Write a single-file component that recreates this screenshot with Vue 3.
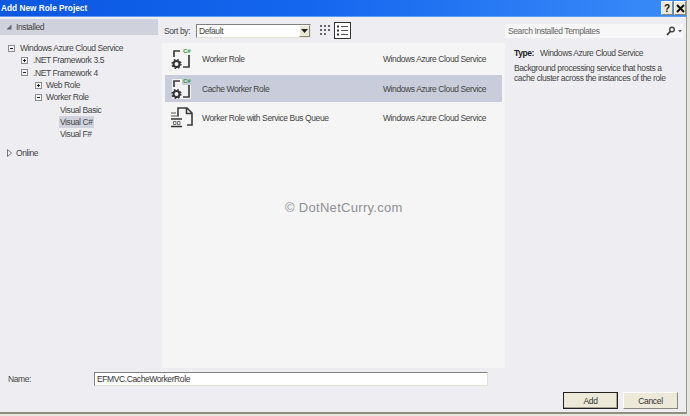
<script setup>
const tree = [
  { label: 'Windows Azure Cloud Service', box: 'minus', left: 8, gap: 4 },
  { label: '.NET Framework 3.5', box: 'plus', left: 21, gap: 4 },
  { label: '.NET Framework 4', box: 'minus', left: 21, gap: 4 },
  { label: 'Web Role', box: 'plus', left: 35, gap: 3 },
  { label: 'Worker Role', box: 'minus', left: 35, gap: 3 },
  { label: 'Visual Basic', left: 59 },
  { label: 'Visual C#', left: 59, selected: true },
  { label: 'Visual F#', left: 59 },
]

const templates = [
  { name: 'Worker Role', icon: 'cs' },
  { name: 'Cache Worker Role', icon: 'cs', selected: true },
  { name: 'Worker Role with Service Bus Queue', icon: 'queue' },
]
</script>

<template>
  <div class="screen">
    <div class="dialog">
      <header class="titlebar">
        <span class="title">Add New Role Project</span>
        <div class="title-buttons">
          <button class="cap-btn">?</button>
          <button class="cap-btn">
            <svg width="9" height="9" viewBox="0 0 9 9"><path d="M1 1l7 7M8 1L1 8" stroke="#111" stroke-width="2" /></svg>
          </button>
        </div>
      </header>

      <div class="body">
        <aside class="sidebar">
          <div class="installed">
            <svg width="6" height="6" viewBox="0 0 6 6"><path d="M5.5 .5v5h-5z" fill="#666" /></svg>
            <span>Installed</span>
          </div>
          <ul class="tree">
            <li v-for="node in tree" :key="node.label" class="tree-row" :style="{ paddingLeft: `${node.left}px` }">
              <svg v-if="node.box" class="expander" :style="{ marginRight: `${node.gap}px` }" width="7" height="7" viewBox="0 0 7 7">
                <rect x=".5" y=".5" width="6" height="6" fill="#f4f4f4" stroke="#8c8c8c" />
                <path d="M2 3.5h3" stroke="#222" />
                <path v-if="node.box === 'plus'" d="M3.5 2v3" stroke="#222" />
              </svg>
              <span class="tree-label" :class="{ selected: node.selected }">{{ node.label }}</span>
            </li>
          </ul>
          <div class="online">
            <svg width="5" height="8" viewBox="0 0 5 8"><path d="M.5 .5l4 3.5-4 3.5z" fill="#f4f4f4" stroke="#777" /></svg>
            <span>Online</span>
          </div>
        </aside>

        <main class="center">
          <div class="toolbar">
            <label class="sort-label">Sort by:</label>
            <div class="select">
              <span class="select-text">Default</span>
              <span class="select-arrow">
                <svg width="7" height="4" viewBox="0 0 7 4"><path d="M0 0h7L3.5 4z" fill="#222" /></svg>
              </span>
            </div>
            <button class="view-btn grid-view">
              <svg width="11" height="11" viewBox="0 0 11 11" fill="#666">
                <rect width="2" height="2" /><rect x="4" width="2" height="2" /><rect x="8" width="2" height="2" />
                <rect y="4" width="2" height="2" /><rect x="4" y="4" width="2" height="2" /><rect x="8" y="4" width="2" height="2" />
                <rect y="8" width="2" height="2" /><rect x="4" y="8" width="2" height="2" />
              </svg>
            </button>
            <button class="view-btn list-view">
              <svg width="11" height="11" viewBox="0 0 11 11">
                <path d="M0 1.500h2M0 5.500h2M0 9.500h2" stroke="#333" stroke-width="2" />
                <path d="M4 1.500h7M4 5.500h7M4 9.500h7" stroke="#555" />
              </svg>
            </button>
          </div>

          <div class="list">
            <div v-for="item in templates" :key="item.name" class="template" :class="{ selected: item.selected }">
              <svg class="template-icon" width="24" height="24" viewBox="0 0 24 24">
                <template v-if="item.icon === 'cs'">
                  <path v-if="item.selected" d="M2 12V2h10v6h9v14H2z" fill="#f2f2f4" />
                  <path d="M4 10V4h6M19 8v12h-6" fill="none" stroke="#3c3c3c" stroke-width="1.700" />
                  <circle cx="6.500" cy="17" r="3" fill="none" stroke="#333" stroke-width="2" />
                  <circle cx="6.500" cy="17" r="4.400" fill="none" stroke="#333" stroke-width="1.400" stroke-dasharray="1.600 1.900" />
                  <text x="13" y="6" class="cs-mark">C#</text>
                </template>
                <template v-else>
                  <path d="M8 10V2h9l5 5v12h-5M16.500 2v5.500H22" fill="none" stroke="#3c3c3c" stroke-width="1.600" />
                  <path d="M1 7h5M1 10h8" stroke="#555" />
                  <path d="M1 13h11M1 20.500h11" stroke="#333" stroke-width="1.400" />
                  <path d="M3.500 15.500h2.500v3h-2.500zM7.500 15.500h2.500v3h-2.500z" fill="none" stroke="#555" stroke-width=".8" />
                </template>
              </svg>
              <span class="template-name">{{ item.name }}</span>
              <span class="template-type">Windows Azure Cloud Service</span>
            </div>
            <div class="watermark">© DotNetCurry.com</div>
          </div>
        </main>

        <aside class="details">
          <div class="search">
            <span>Search Installed Templates</span>
            <svg class="search-icon" width="16" height="10" viewBox="0 0 16 10">
              <circle cx="6" cy="3.500" r="2.300" fill="none" stroke="#444" stroke-width="1.400" />
              <path d="M4.300 5.500L1 9" stroke="#333" stroke-width="1.800" />
              <path d="M12 4h4l-2 2.300z" fill="#555" />
            </svg>
          </div>
          <div class="info">
            <p class="type"><b>Type:</b><span>Windows Azure Cloud Service</span></p>
            <p class="desc">Background processing service that hosts a cache cluster across the instances of the role</p>
          </div>
        </aside>
      </div>

      <footer class="footer">
        <div class="name-row">
          <label class="name-label">Name:</label>
          <div class="name-input">EFMVC.CacheWorkerRole</div>
        </div>
        <div class="actions">
          <button class="btn default">Add</button>
          <button class="btn">Cancel</button>
        </div>
      </footer>
    </div>
  </div>
</template>

<style scoped>
.screen {
  width: 690px;
  height: 416px;
  overflow: hidden;
  background: #e6e6de;
  font-family: "Liberation Sans", Arial, sans-serif;
  font-size: 8.500px;
  letter-spacing: -0.4px;
  color: #444;
}

.dialog {
  display: flex;
  flex-direction: column;
  width: 687px;
  height: 414px;
  box-sizing: border-box;
  background: #eeeef2;
  border-right: 1px solid #9a9a8e;
  border-bottom: 2px solid #8f8f80;
}

.titlebar {
  display: flex;
  align-items: center;
  justify-content: space-between;
  height: 17px;
  flex: none;
  padding-left: 1px;
  background: linear-gradient(90deg, #0a57e0 0%, #1566ee 45%, #3b8cf8 100%);
  border-bottom: 1px solid #5b9cf2;
  box-sizing: border-box;
}

.title {
  font-size: 8.300px;
  font-weight: 700;
  letter-spacing: 0;
  color: #fff;
}

.title-buttons {
  display: flex;
  gap: 1px;
}

.cap-btn {
  display: flex;
  align-items: center;
  justify-content: center;
  width: 12px;
  height: 14px;
  padding: 0;
  background: #ece9d8;
  border: 1px solid;
  border-color: #fff #8a8878 #8a8878 #fff;
  font: 700 10px "Liberation Sans", Arial, sans-serif;
  color: #111;
}

.body {
  display: flex;
  flex: 1;
  min-height: 0;
}

.sidebar {
  width: 162px;
  flex: none;
  padding-top: 2px;
}

.installed {
  display: flex;
  align-items: center;
  gap: 4px;
  height: 16px;
  width: 158px;
  padding-left: 6px;
  box-sizing: border-box;
  background: #cfd1dc;
}

.tree {
  list-style: none;
  margin: 7px 0 0;
  padding: 0;
}

.tree-row {
  display: flex;
  align-items: center;
  height: 12.300px;
}

.expander {
  flex: none;
}

.tree-label {
  padding: 0 1px;
  line-height: 12px;
}

.tree-label.selected {
  background: #d0d2de;
}

.online {
  display: flex;
  align-items: center;
  gap: 4px;
  margin-top: 8px;
  padding-left: 7px;
}

.center {
  display: flex;
  flex-direction: column;
  width: 343px;
  flex: none;
}

.toolbar {
  display: flex;
  align-items: center;
  height: 26px;
  flex: none;
  padding: 1px 0 0 2px;
  box-sizing: border-box;
}

.sort-label {
  width: 32px;
  flex: none;
}

.select {
  display: flex;
  align-items: center;
  justify-content: space-between;
  width: 115px;
  height: 14px;
  box-sizing: border-box;
  background: #fff;
  border: 1px solid;
  border-color: #808080 #e4e2d6 #e4e2d6 #808080;
}

.select-text {
  padding-left: 2px;
}

.select-arrow {
  display: flex;
  align-items: center;
  justify-content: center;
  width: 11px;
  height: 12px;
  background: #ece9d8;
  border: 1px solid;
  border-color: #fff #8a8878 #8a8878 #fff;
  box-sizing: border-box;
}

.view-btn {
  display: flex;
  align-items: center;
  justify-content: center;
  padding: 0;
  background: none;
  border: 1px solid transparent;
}

.grid-view {
  width: 16px;
  height: 17px;
  margin-left: 6px;
}

.list-view {
  width: 17px;
  height: 17px;
  margin-left: 1px;
  background: #fff;
  border-color: #333;
}

.list {
  position: relative;
  flex: 1;
  padding: 2.500px 3px 0;
  background: #f5f5f5;
}

.template {
  display: flex;
  align-items: center;
  height: 27px;
  margin-bottom: 2.500px;
  padding-left: 5px;
}

.template.selected {
  background: #c9ccda;
}

.template-icon {
  flex: none;
  margin-right: 8px;
}

.cs-mark {
  font: 700 6px "Liberation Sans", Arial, sans-serif;
  letter-spacing: 0;
  fill: #27983a;
}

.template-name {
  width: 181px;
  flex: none;
}

.watermark {
  position: absolute;
  left: 123px;
  top: 157px;
  font-size: 13px;
  letter-spacing: 0.3px;
  color: #8f8f96;
  white-space: nowrap;
}

.details {
  flex: 1;
  padding-top: 7px;
}

.search {
  display: flex;
  align-items: center;
  justify-content: space-between;
  width: 178px;
  height: 14px;
  padding: 0 1px 0 3px;
  box-sizing: border-box;
  background: #f7f7f7;
  color: #666;
}

.info {
  padding: 10px 4px 0 9px;
}

.info p {
  margin: 0;
}

.type {
  display: flex;
  gap: 6px;
  line-height: 10px;
}

.type b {
  color: #222;
}

.desc {
  margin-top: 6px !important;
  line-height: 9.500px;
}

.footer {
  display: flex;
  flex-direction: column;
  height: 44px;
  flex: none;
  padding: 4px 8px 0;
  box-sizing: border-box;
}

.name-row {
  display: flex;
  align-items: center;
  height: 14px;
}

.name-label {
  width: 86px;
  flex: none;
}

.name-input {
  width: 394px;
  height: 14px;
  padding-left: 2px;
  box-sizing: border-box;
  line-height: 12px;
  background: #fff;
  border: 1px solid;
  border-color: #808080 #e4e2d6 #e4e2d6 #808080;
  color: #333;
}

.actions {
  display: flex;
  justify-content: flex-end;
  gap: 5px;
  margin-top: 6px;
}

.btn {
  width: 55px;
  height: 17px;
  padding: 0;
  background: #ece9d8;
  border: 1px solid;
  border-color: #fff #8a8878 #8a8878 #fff;
  font: 8.500px "Liberation Sans", Arial, sans-serif;
  letter-spacing: -0.3px;
  color: #333;
}

.btn.default {
  border-color: #222;
  box-shadow: inset -1px -1px 0 #a8a696;
}
</style>
